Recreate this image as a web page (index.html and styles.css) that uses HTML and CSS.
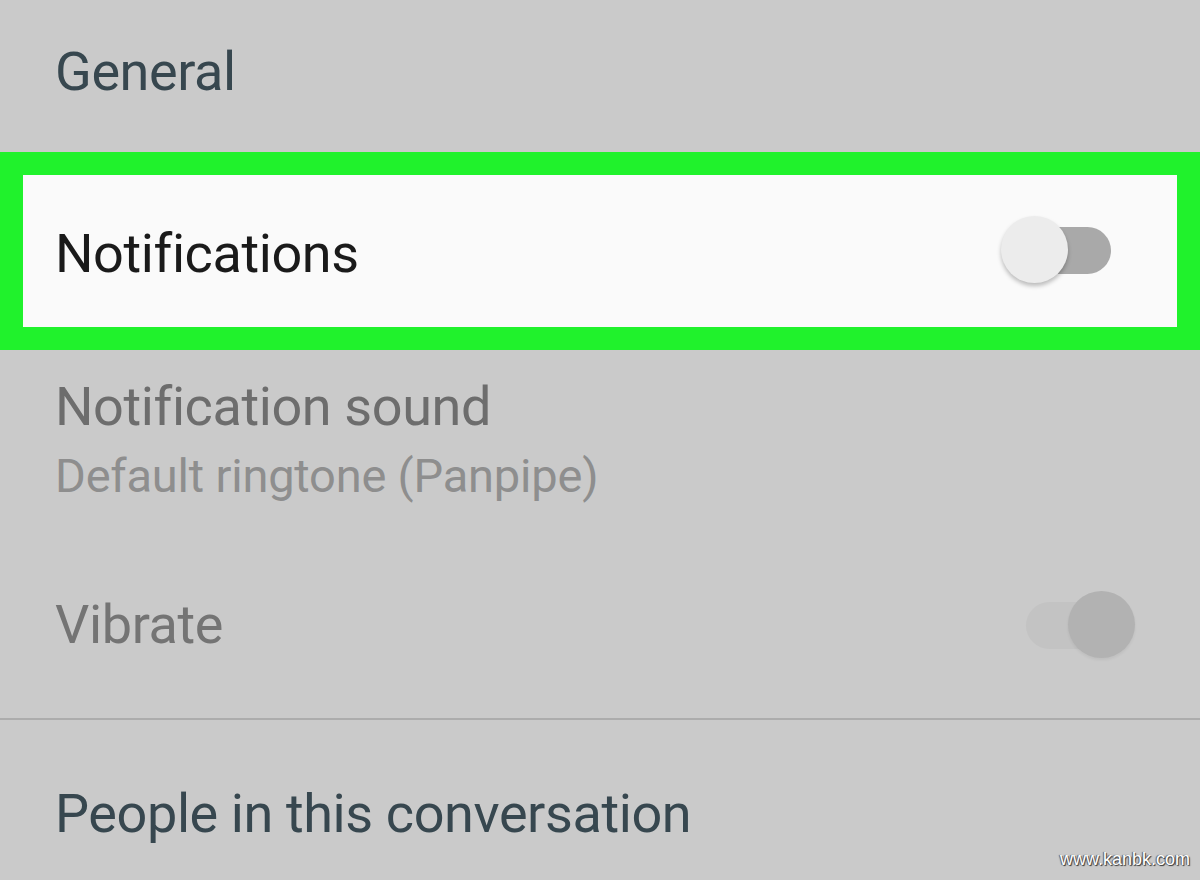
FILE: index.html
```html
<!DOCTYPE html>
<html>
<head>
<meta charset="utf-8">
<link rel="stylesheet" href="styles.css">
</head>
<body>
<div class="screen">
  <div class="row header"><span class="title general">General</span></div>
  <div class="highlight">
    <div class="row notif">
      <span class="title dark">Notifications</span>
      <div class="switch off"><div class="track"></div><div class="thumb"></div></div>
    </div>
  </div>
  <div class="row sound">
    <div class="stack">
      <span class="title muted">Notification sound</span>
      <span class="sub">Default ringtone (Panpipe)</span>
    </div>
  </div>
  <div class="row vibrate">
    <span class="title muted2">Vibrate</span>
    <div class="switch on"><div class="track"></div><div class="thumb"></div></div>
  </div>
  <div class="divider"></div>
  <div class="row people"><span class="title general">People in this conversation</span></div>
  <div class="watermark">www.kanbk.com</div>
</div>
</body>
</html>
```
FILE: styles.css
```css
html, body { margin: 0; padding: 0; }
body { background: #cacaca; font-family: Roboto, "Noto Sans", sans-serif; }
.screen { width: 1200px; height: 880px; position: relative; overflow: hidden; background: #cacaca; }
.row { display: flex; align-items: center; justify-content: space-between; padding-left: 55px; box-sizing: border-box; }
.title { font-size: 54px; line-height: 1; letter-spacing: -0.4px; }
.general { color: #37474f; }
.dark { color: #1a1a1a; }
.muted { color: #6d6d6d; }
.muted2 { color: #747474; }
.header { height: 152px; padding-bottom: 9px; }
.highlight { border: 23px solid #20f22c; background: #fafafa; height: 198px; box-sizing: border-box; }
.notif { height: 152px; padding-left: 32px; padding-right: 66px; padding-top: 5px; }
.notif .switch { margin-top: -7px; }
.sound { height: 190px; align-items: flex-start; padding-top: 30px; }
.stack { display: flex; flex-direction: column; gap: 18px; }
.sub { font-size: 47px; color: #8e8e8e; line-height: 1; letter-spacing: -0.2px; }
.vibrate { height: 178px; padding-right: 64px; padding-bottom: 9px; }
.divider { height: 2px; background: #acacac; }
.people { height: 160px; padding-top: 27px; }
.switch { position: relative; width: 110px; height: 68px; }
.track { position: absolute; top: 11px; left: 33px; width: 77px; height: 47px; border-radius: 24px; }
.thumb { position: absolute; top: 0; left: 0; width: 67px; height: 67px; border-radius: 50%; }
.off .track { background: #a9a9a9; }
.off .thumb { background: #ececec; box-shadow: 0 3px 4px rgba(0,0,0,0.25); }
.on .track { left: 0; background: #c3c3c3; width: 76px; }
.on .thumb { left: 42px; background: #b2b2b2; box-shadow: 0 2px 3px rgba(0,0,0,0.06); }
.watermark { position: absolute; right: 10px; bottom: 10px; font-family: "Liberation Sans", Arial, sans-serif; font-size: 18px; color: #ffffff; text-shadow: 1px 1px 1px #333, -1px 0 1px #555; }
```
